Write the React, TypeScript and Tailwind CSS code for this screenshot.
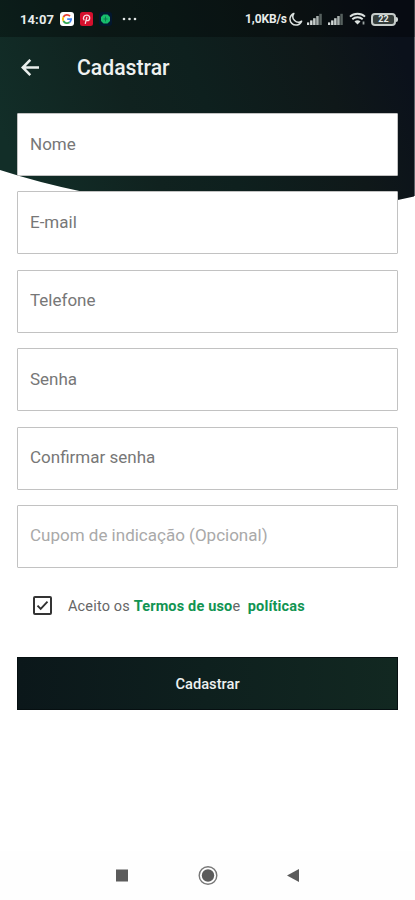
import { useState } from "react";

const fields = [
    { name: 'nome', label: 'Nome', type: 'text' },
    { name: 'email', label: 'E-mail', type: 'text' },
    { name: 'telefone', label: 'Telefone', type: 'text' },
    { name: 'senha', label: 'Senha', type: 'password' },
    { name: 'confirmar', label: 'Confirmar senha', type: 'password' },
    { name: 'cupom', label: 'Cupom de indicação (Opcional)', type: 'text', optional: true },
];

function Signal() {
    return (
        <svg width="16" height="12" viewBox="0 0 16 12">
            <rect x="0" y="9.4" width="2.2" height="2.6" fill="#d4dad9" />
            <rect x="3.1" y="7.4" width="2.4" height="4.6" fill="#d4dad9" />
            <rect x="6.1" y="5.2" width="2.5" height="6.8" fill="#c4cbc9" />
            <rect x="9.2" y="3" width="2.5" height="9" fill="#a7afad" />
            <rect x="12.3" y="0.8" width="2.5" height="11.2" fill="#56605e" />
        </svg>
    )
}

function StatusBar() {
    return (
        <div className="flex h-[37px] items-center bg-black/30 pl-5 pt-px text-[#e8eceb]">
            <span className="w-[40px] text-[13px] font-bold leading-none tracking-[0.1px]">14:07</span>
            <svg width="14" height="14" viewBox="0 0 14 14">
                <rect width="14" height="14" rx="3" fill="#fff" />
                <g fill="none" strokeWidth="1.8">
                    <path d="M10 4.1A4.1 4.1 0 0 0 3.4 5" stroke="#ea4335" />
                    <path d="M3.4 5A4.1 4.1 0 0 0 3.4 9" stroke="#fbbc05" />
                    <path d="M3.4 9A4.1 4.1 0 0 0 9.6 10.2" stroke="#34a853" />
                    <path d="M9.6 10.2A4.1 4.1 0 0 0 11.1 7.2H7.2" stroke="#4285f4" />
                </g>
            </svg>
            <svg className="ml-[6px]" width="13" height="14" viewBox="0 0 13 14">
                <rect width="13" height="14" rx="2.5" fill="#d5102d" />
                <path d="M4 7.8C2.7 6.2 3.8 3.2 6.8 3.2c4 0 3.5 5.5.5 5.5-1 0-1.4-.7-1.4-.7M6.8 5.4 5.3 11.3" fill="none" stroke="#f7dfe3" strokeWidth="1.3" strokeLinecap="round" />
            </svg>
            <svg className="ml-[6px]" width="13" height="14" viewBox="0 0 13 14">
                <rect width="13" height="14" rx="3" fill="#03172f" />
                <path d="M4.5 2.5h4L11 5v4l-2.5 2.500h-4L2 9V5z" fill="#17bd6c" />
                <path d="M6.5 4.5v5M4.500 7h4" stroke="#0b7b50" strokeWidth="1" />
            </svg>
            <svg className="ml-[10px]" width="16" height="4" viewBox="0 0 16 4" fill="#e0e5e4">
                <circle cx="2" cy="2" r="1.3" />
                <circle cx="7.5" cy="2" r="1.3" />
                <circle cx="13" cy="2" r="1.3" />
            </svg>
            <div className="ml-auto flex items-center pr-[17px]">
                <span className="w-[45px] whitespace-nowrap text-[12px] font-bold leading-none tracking-[-0.1px]">1,0KB/s</span>
                <svg className="-ml-px" width="14" height="14" viewBox="0 0 14 14">
                    <path d="M4.8 1.5A6 6 0 1 0 12.600 9.200 5.600 5.600 0 0 1 4.8 1.5Z" fill="none" stroke="#dce2e0" strokeWidth="1.5" strokeLinejoin="round" />
                </svg>
                <div className="ml-[4px] flex gap-[5px]">
                    <Signal />
                    <Signal />
                </div>
                <svg className="ml-[5px]" width="17" height="14" viewBox="0 0 17 14" fill="none" stroke="#dce2e0" strokeWidth="1.9">
                    <path d="M1 4.600C5 .8 12 .8 16 4.600M3.300 7.300c3-2.700 7.400-2.700 10.400 0" />
                    <path d="M5.500 9.400c1.700-1.400 4.300-1.400 6 0L8.500 12.500z" fill="#dce2e0" stroke="none" />
                    <path d="M14.500 9.500v3" strokeWidth="1.8" stroke="#9ba4a2" />
                </svg>
                <div className="ml-[5px] flex h-[13px] w-[25px] items-center justify-center rounded-[4px] border-2 border-[#c5cbc9] bg-[#353d3b] text-[9px] font-bold leading-none">
                    22
                </div>
                <span className="h-[5px] w-[2px] rounded-r-sm bg-[#d0d6d4]"></span>
            </div>
        </div>
    )
}

export default function App() {
    const [accepted, setAccepted] = useState(true);

    return (
        <div className="relative flex h-[900px] w-full max-w-[415px] flex-col overflow-hidden bg-white font-['Roboto',sans-serif]">
            {/* curved backdrop behind the header and the first field */}
            <svg className="absolute left-0 top-0" width="415" height="230" viewBox="0 0 415 230">
                <defs>
                    <linearGradient id="backdrop" x1="0" y1="0.6" x2="1" y2="0.4">
                        <stop offset="0" stopColor="#122e28" />
                        <stop offset="0.32" stopColor="#10221f" />
                        <stop offset="0.5" stopColor="#0e201e" />
                        <stop offset="0.8" stopColor="#0f1819" />
                        <stop offset="1" stopColor="#0b111b" />
                    </linearGradient>
                </defs>
                <rect x="413" width="2" height="196" fill="#5c6166" />
                <path d="M0 0H414V196.500L399 199.800C300 220 180 216 84 192Q40 183 0 170Z" fill="url(#backdrop)" />
            </svg>

            <div className="relative flex flex-1 flex-col">
                <StatusBar />

                <header className="flex h-[61px] items-center pl-[21px]">
                    <svg width="20" height="18" viewBox="0 0 20 18" fill="none" stroke="#e9eeec" strokeWidth="2.5">
                        <path d="M18 8.500H2M9.300 .8 1.700 8.500l7.600 7.700" />
                    </svg>
                    <h1 className="ml-[36px] text-[21.200px] font-medium leading-none text-[#eef1f0]">Cadastrar</h1>
                </header>

                <form className="flex flex-col px-[17px] pt-[15px]" onSubmit={(e) => e.preventDefault()}>
                    <div className="flex flex-col gap-[15.400px]">
                        {fields.map((field) => (
                            <input
                                key={field.name}
                                type={field.type}
                                name={field.name}
                                placeholder={field.label}
                                className={`h-[63px] w-full rounded-[1px] border border-[#c2c2c2] bg-white px-3 pb-[2px] text-[17px] text-[#333] outline-none ${field.optional ? 'placeholder:text-[#a9a9a9]' : 'placeholder:text-[#777]'}`}
                            />
                        ))}
                    </div>

                    <div className="mt-[28px] flex h-5 items-center pl-[16px] text-[14.500px] tracking-[0.160px]">
                        <button
                            type="button"
                            role="checkbox"
                            aria-checked={accepted}
                            onClick={() => setAccepted(!accepted)}
                            className="flex size-[19px] items-center justify-center rounded-[2px] border-2 border-[#343434]"
                        >
                            {accepted && (
                                <svg width="13" height="11" viewBox="0 0 13 11" fill="none" stroke="#303030" strokeWidth="1.9">
                                    <path d="M1.500 5.600 4.700 8.800 11.500 1.700" />
                                </svg>
                            )}
                        </button>
                        <p className="ml-4 whitespace-pre pt-px text-[#666]">
                            Aceito os <a className="font-bold text-[#119452]">Termos de uso</a>e  <a className="font-bold text-[#119452]">políticas</a>
                        </p>
                    </div>

                    <button
                        type="submit"
                        className="mt-[41px] h-[53px] w-full border border-[#060f11] bg-linear-to-r from-[#0b171a] via-[#0e201e] to-[#122821] pt-[2px] text-[14.700px] font-medium text-[#edf1f0]"
                    >
                        Cadastrar
                    </button>
                </form>

                <nav className="mt-auto flex h-[49px] items-center justify-center bg-[#fefefe]">
                    <svg width="186" height="22" viewBox="0 0 186 22" fill="#5b5b5b">
                        <rect x="1" y="4.500" width="12" height="12" />
                        <circle cx="93" cy="10.500" r="8.800" fill="none" stroke="#777" strokeWidth="1.4" />
                        <circle cx="93" cy="10.500" r="6.200" />
                        <path d="M172 10.500 184 4v13z" />
                    </svg>
                </nav>
            </div>
        </div>
    )
}
